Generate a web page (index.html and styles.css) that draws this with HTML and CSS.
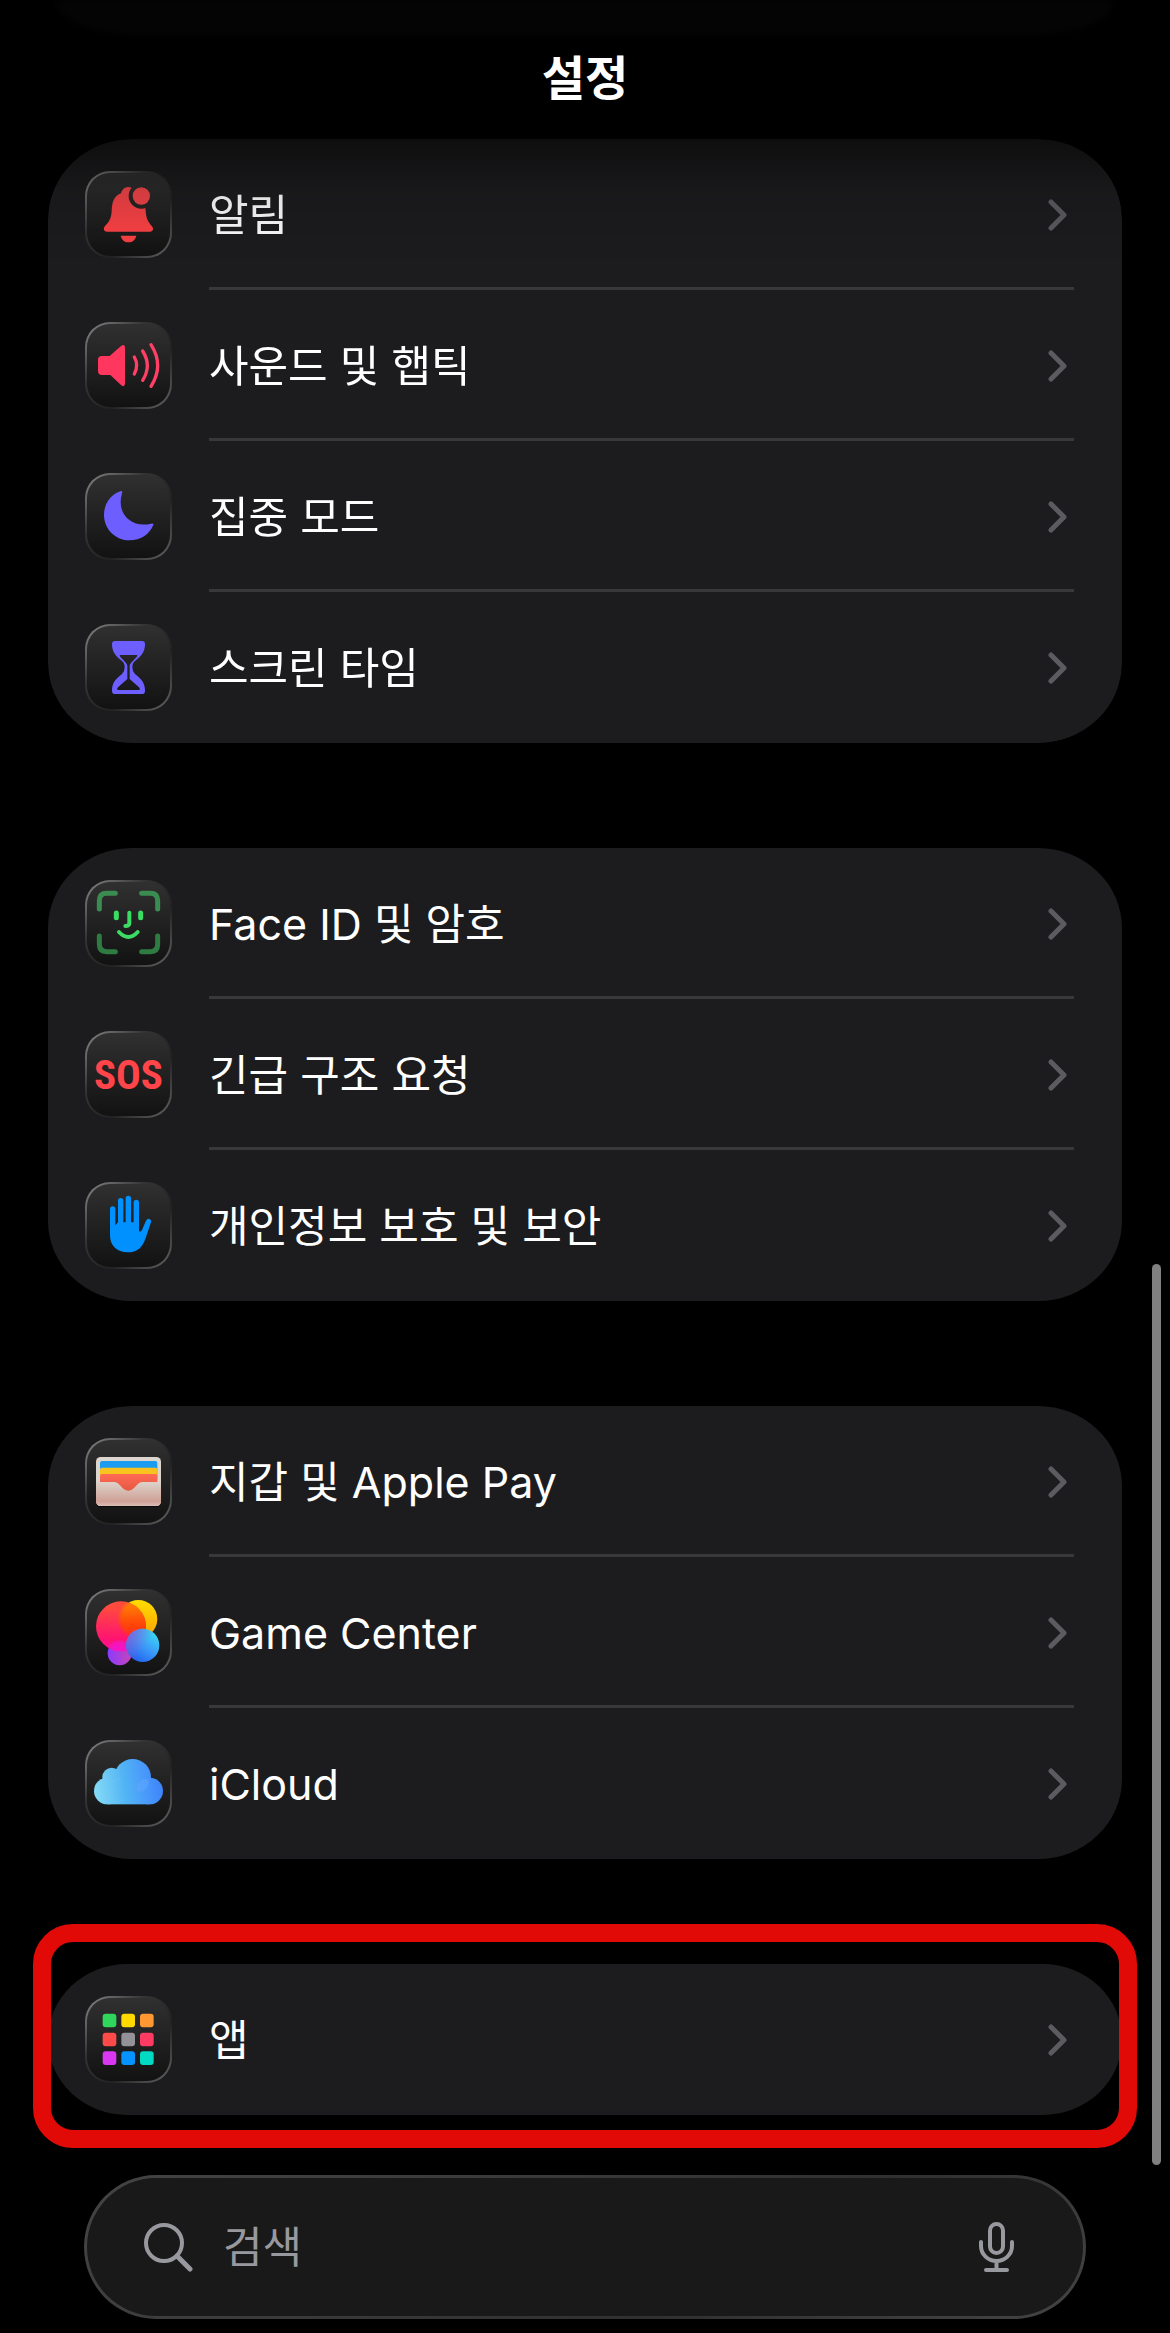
FILE: index.html
```html
<!DOCTYPE html>
<html lang="ko">
<head>
    <meta charset="UTF-8">
    <meta name="viewport" content="width=device-width, initial-scale=1.0">
    <title>설정</title>
    <link rel="stylesheet" href="styles.css">
</head>
<body>
    <header class="header">
        <div class="card-peek"></div>
        <h1 class="title">설정</h1>
    </header>

    <main class="groups">
        <nav class="card card-faded">
            <a class="row" href="#notifications">
                <span class="tile">
                    <svg viewBox="6 6 249 249">
                        <defs>
                            <linearGradient id="bell" x1="0" y1="0" x2="0" y2="1">
                                <stop offset="0" stop-color="#f04448"/>
                                <stop offset="1" stop-color="#ff4245"/>
                            </linearGradient>
                            <mask id="bell-cut">
                                <rect width="261" height="261" fill="#fff"/>
                                <circle cx="169" cy="75" r="38" fill="#000"/>
                            </mask>
                        </defs>
                        <path mask="url(#bell-cut)" fill="url(#bell)" d="M66 182C56 182 54 172 60 165C72 153 79 142 80 120C81 92 88 74 108 67C112 54 120 48 131 48C141 48 148 54 152 67C172 74 181 92 182 120C183 142 190 153 200 165C207 172 205 182 195 182Z"/>
                        <circle cx="169" cy="75" r="26" fill="#f04448"/>
                        <path fill="#ff4245" d="M107 194H154C151 207 142 214 130 214C119 214 110 207 107 194Z"/>
                    </svg>
                </span>
                <span class="label">알림</span>
                <svg class="chevron" viewBox="0 0 19 32"><path d="M3 3L16 16L3 29"/></svg>
            </a>
            <a class="row" href="#sounds">
                <span class="tile">
                    <svg viewBox="6 6 249 249">
                        <path fill="#ff375f" d="M51 102H74L108 72Q120 64 120 77V184Q120 198 108 189L76 159H51Q39 159 39 148V113Q39 102 51 102Z"/>
                        <g fill="none" stroke="#ff3f66" stroke-width="10" stroke-linecap="round">
                            <path d="M148 105Q162 130 148 156"/>
                            <path d="M173 87Q201 131 173 175"/>
                            <path d="M198 68Q238 131 198 193"/>
                        </g>
                    </svg>
                </span>
                <span class="label">사운드 및 햅틱</span>
                <svg class="chevron" viewBox="0 0 19 32"><path d="M3 3L16 16L3 29"/></svg>
            </a>
            <a class="row" href="#focus">
                <span class="tile">
                    <svg viewBox="6 6 249 249">
                        <path fill="#6d5fff" d="M108 54C78 63 57 92 57 125C57 168 91 202 134 202C166 202 194 184 205 156Q207 150 198 152C150 164 107 135 107 88Q107 76 111 61Q113 52 108 54Z"/>
                    </svg>
                </span>
                <span class="label">집중 모드</span>
                <svg class="chevron" viewBox="0 0 19 32"><path d="M3 3L16 16L3 29"/></svg>
            </a>
            <a class="row" href="#screen-time">
                <span class="tile">
                    <svg viewBox="6 6 249 249">
                        <path fill="#6d5fff" fill-rule="evenodd" d="M90 51H171Q180 51 180 61C180 85 168 97 150 111Q142 117 142 130Q142 143 150 150C168 164 180 176 180 200Q180 210 171 210H90Q81 210 81 200C81 176 93 164 111 150Q119 143 119 130Q119 117 111 111C93 97 81 85 81 61Q81 51 90 51ZM104 93Q104 98 110 103L123 117Q127 121 127 126V165L99 190Q94 195 98 198H163Q167 195 162 190L134 165V126Q134 121 138 117L151 103Q157 98 157 93Z"/>
                    </svg>
                </span>
                <span class="label">스크린 타임</span>
                <svg class="chevron" viewBox="0 0 19 32"><path d="M3 3L16 16L3 29"/></svg>
            </a>
        </nav>

        <nav class="card">
            <a class="row" href="#face-id">
                <span class="tile">
                    <svg viewBox="6 6 249 249" fill="none" stroke-linecap="round">
                        <g stroke-width="15">
                            <path stroke="#3b8c50" d="M43 87V62Q43 40 65 40H91M170 40H196Q218 40 218 62V87"/>
                            <path stroke="#2f7c43" d="M43 168V193Q43 215 65 215H91M170 215H196Q218 215 218 193V168"/>
                        </g>
                        <path stroke="#3bdc63" stroke-width="15" d="M94 99V113M167 99V113"/>
                        <path stroke="#3bdc63" stroke-width="12" d="M133 98V130Q133 138 121 138"/>
                        <path stroke="#3bdc63" stroke-width="12" d="M102 156Q130 186 158 156"/>
                    </svg>
                </span>
                <span class="label">Face ID 및 암호</span>
                <svg class="chevron" viewBox="0 0 19 32"><path d="M3 3L16 16L3 29"/></svg>
            </a>
            <a class="row" href="#sos">
                <span class="tile tile-sos">SOS</span>
                <span class="label">긴급 구조 요청</span>
                <svg class="chevron" viewBox="0 0 19 32"><path d="M3 3L16 16L3 29"/></svg>
            </a>
            <a class="row" href="#privacy">
                <span class="tile">
                    <svg viewBox="6 6 249 249">
                        <g stroke="#0091ff" stroke-width="16" stroke-linecap="round">
                            <path d="M83 81V150M107 56V150M130 49V150M154 61V150"/>
                        </g>
                        <path fill="#0091ff" d="M75 130L91 130L99 121H162V146Q166 152 171 144L183 116Q188 108 194 111Q200 114 198 121L182 168C172 198 155 211 128 211C95 211 75 190 75 160Z"/>
                    </svg>
                </span>
                <span class="label">개인정보 보호 및 보안</span>
                <svg class="chevron" viewBox="0 0 19 32"><path d="M3 3L16 16L3 29"/></svg>
            </a>
        </nav>

        <nav class="card">
            <a class="row" href="#wallet">
                <span class="tile">
                    <svg viewBox="6 6 249 249">
                        <defs>
                            <linearGradient id="pocket" x1="0" y1="0" x2="0" y2="1">
                                <stop offset="0" stop-color="#dcd3cb"/>
                                <stop offset="0.8" stop-color="#d0a196"/>
                                <stop offset="1" stop-color="#d9bdb3"/>
                            </linearGradient>
                            <linearGradient id="card-red" x1="0" y1="0" x2="0" y2="1">
                                <stop offset="0" stop-color="#ff6a55"/>
                                <stop offset="1" stop-color="#e0553f"/>
                            </linearGradient>
                        </defs>
                        <rect x="33" y="61" width="195" height="147" rx="14" fill="#0c0c0c"/>
                        <rect x="33" y="57" width="195" height="147" rx="14" fill="#ddd6ce"/>
                        <rect x="45" y="69" width="172" height="60" rx="6" fill="#1c9cf0"/>
                        <rect x="45" y="89" width="172" height="50" rx="6" fill="#f9c31f"/>
                        <rect x="45" y="108" width="172" height="60" rx="6" fill="url(#card-red)"/>
                        <path fill="url(#pocket)" d="M33 132H86C106 132 110 158 130 158C150 158 154 132 174 132H228V190Q228 204 214 204H47Q33 204 33 190Z"/>
                    </svg>
                </span>
                <span class="label">지갑 및 Apple Pay</span>
                <svg class="chevron" viewBox="0 0 19 32"><path d="M3 3L16 16L3 29"/></svg>
            </a>
            <a class="row" href="#game-center">
                <span class="tile">
                    <svg viewBox="6 6 249 249">
                        <defs>
                            <linearGradient id="gc-yellow" x1="0" y1="0" x2="0" y2="1">
                                <stop offset="0" stop-color="#ffdc00"/>
                                <stop offset="1" stop-color="#ffa000"/>
                            </linearGradient>
                            <linearGradient id="gc-pink" x1="0" y1="0" x2="0" y2="1">
                                <stop offset="0.1" stop-color="#ff4b3e"/>
                                <stop offset="0.75" stop-color="#ff1470"/>
                                <stop offset="1" stop-color="#ff10a0"/>
                            </linearGradient>
                            <linearGradient id="gc-mix" x1="0" y1="0" x2="0" y2="1">
                                <stop offset="0" stop-color="#ff9000"/>
                                <stop offset="0.7" stop-color="#ff4200"/>
                                <stop offset="1" stop-color="#ff3020"/>
                            </linearGradient>
                            <linearGradient id="gc-purple" x1="0" y1="0" x2="1" y2="0">
                                <stop offset="0" stop-color="#8a3cff"/>
                                <stop offset="1" stop-color="#c844b8"/>
                            </linearGradient>
                            <linearGradient id="gc-blue" x1="0.9" y1="0.1" x2="0.3" y2="1">
                                <stop offset="0" stop-color="#38dcf4"/>
                                <stop offset="0.5" stop-color="#3c9cf8"/>
                                <stop offset="1" stop-color="#2260f0"/>
                            </linearGradient>
                            <linearGradient id="gc-shade" x1="0" y1="0.1" x2="0.6" y2="0.5">
                                <stop offset="0" stop-color="#8060d8"/>
                                <stop offset="1" stop-color="#8060d8" stop-opacity="0"/>
                            </linearGradient>
                            <clipPath id="gc-pink-clip"><circle cx="108" cy="112" r="75"/></clipPath>
                            <filter id="gc-soft"><feGaussianBlur stdDeviation="5"/></filter>
                        </defs>
                        <circle cx="104" cy="193" r="36" fill="url(#gc-purple)"/>
                        <circle cx="160" cy="90" r="57" fill="url(#gc-yellow)"/>
                        <circle cx="108" cy="112" r="75" fill="url(#gc-pink)"/>
                        <g clip-path="url(#gc-pink-clip)">
                            <circle cx="160" cy="90" r="57" fill="url(#gc-mix)" opacity="0.9" filter="url(#gc-soft)"/>
                            <circle cx="104" cy="193" r="36" fill="#f018d0" opacity="0.8" filter="url(#gc-soft)"/>
                        </g>
                        <circle cx="173" cy="169" r="50" fill="url(#gc-blue)"/>
                        <circle cx="173" cy="169" r="50" fill="url(#gc-shade)"/>
                    </svg>
                </span>
                <span class="label">Game Center</span>
                <svg class="chevron" viewBox="0 0 19 32"><path d="M3 3L16 16L3 29"/></svg>
            </a>
            <a class="row" href="#icloud">
                <span class="tile">
                    <svg viewBox="6 6 249 249">
                        <defs>
                            <linearGradient id="cloud" gradientUnits="userSpaceOnUse" x1="27" y1="160" x2="234" y2="130">
                                <stop offset="0" stop-color="#86dcf6"/>
                                <stop offset="0.45" stop-color="#52b4f4"/>
                                <stop offset="0.8" stop-color="#4794fc"/>
                                <stop offset="1" stop-color="#3d82f8"/>
                            </linearGradient>
                        </defs>
                        <g fill="url(#cloud)">
                            <circle cx="67" cy="153" r="40"/>
                            <circle cx="194" cy="153" r="40"/>
                            <circle cx="80" cy="111" r="28"/>
                            <circle cx="143" cy="112" r="55"/>
                            <rect x="67" y="120" width="127" height="73"/>
                        </g>
                        <ellipse cx="173" cy="136" rx="14" ry="23" fill="#62a8ff" opacity="0.5" transform="rotate(40 173 136)"/>
                        <path fill="none" stroke="#7cc4fc" stroke-width="2" opacity="0.7" d="M53 120Q84 132 107 114"/>
                    </svg>
                </span>
                <span class="label">iCloud</span>
                <svg class="chevron" viewBox="0 0 19 32"><path d="M3 3L16 16L3 29"/></svg>
            </a>
        </nav>

        <nav class="card card-marked">
            <a class="row" href="#apps">
                <span class="tile">
                    <svg viewBox="6 6 249 249">
                        <rect x="53" y="53" width="41" height="41" rx="9" fill="#30d65c"/>
                        <rect x="109" y="53" width="41" height="41" rx="9" fill="#ffd900"/>
                        <rect x="165" y="53" width="41" height="41" rx="9" fill="#ff9733"/>
                        <rect x="53" y="110" width="41" height="41" rx="9" fill="#ff4a4a"/>
                        <rect x="109" y="110" width="41" height="41" rx="9" fill="#929298"/>
                        <rect x="165" y="110" width="41" height="41" rx="9" fill="#ff3b64"/>
                        <rect x="53" y="166" width="41" height="41" rx="9" fill="#da37f2"/>
                        <rect x="109" y="166" width="41" height="41" rx="9" fill="#0793ff"/>
                        <rect x="165" y="166" width="41" height="41" rx="9" fill="#03dac3"/>
                    </svg>
                </span>
                <span class="label">앱</span>
                <svg class="chevron" viewBox="0 0 19 32"><path d="M3 3L16 16L3 29"/></svg>
            </a>
        </nav>
    </main>

    <form class="search" role="search">
        <label class="search-icon" for="search-input" aria-label="검색">
            <svg viewBox="0 0 49 49"><circle cx="20" cy="20" r="18"/><path d="M33 33L46 46" stroke-width="5"/></svg>
        </label>
        <input class="search-input" id="search-input" type="search" placeholder="검색">
        <button class="mic" type="button" aria-label="받아쓰기">
            <svg viewBox="0 0 35 50">
                <rect x="11" y="2" width="13" height="29" rx="6.5"/>
                <path d="M2 20V24A15.5 15 0 0 0 33 24V20M17.5 39V47M7 48H28"/>
            </svg>
        </button>
    </form>

    <div class="scrollbar"></div>
</body>
</html>
```
FILE: styles.css
```css
* {
    box-sizing: border-box;
}

body {
    margin: 0;
    padding-bottom: 14px;
    background-color: #000;
    color: #fff;
    font-family: Inter, 'Noto Sans CJK KR', sans-serif;
    font-size: 43px;
    line-height: 52px;
}

svg {
    display: block;
}

.header {
    height: 139px;
    text-align: center;
}

/* 위로 스크롤된 카드의 아래쪽 */
.card-peek {
    height: 35px;
    margin: 0 56px;
    border-radius: 0 0 80px 80px / 0 0 35px 35px;
    background-color: #040404;
    filter: blur(3px);
}

.title {
    margin: 0;
    padding-top: 11px;
    font-size: 47px;
    font-weight: 600;
    line-height: 64px;
}

.groups {
    display: flex;
    flex-direction: column;
    gap: 105px;
    padding: 0 48px;
}

.card {
    position: relative;
    border-radius: 84px / 80px;
    background-color: #1c1c1e;
}

/* 제목 아래에서 흐려지는 첫 카드 */
.card-faded {
    -webkit-mask-image: linear-gradient(rgba(0, 0, 0, 0.5), rgba(0, 0, 0, 0.88) 52px, #000 130px);
    mask-image: linear-gradient(rgba(0, 0, 0, 0.5), rgba(0, 0, 0, 0.88) 52px, #000 130px);
}

/* 강조 테두리 */
.card-marked::after {
    content: "";
    position: absolute;
    inset: -40px -15px -33px;
    border: 18px solid #e20a07;
    border-radius: 40px;
    pointer-events: none;
}

.row {
    position: relative;
    display: flex;
    align-items: center;
    gap: 37px;
    height: 151px;
    padding: 0 55px 0 37px;
    color: #fff;
    text-decoration: none;
}

.row:not(:last-child)::after {
    content: "";
    position: absolute;
    left: 161px;
    right: 48px;
    bottom: 0;
    height: 3px;
    background-color: #38383a;
}

.tile {
    flex: none;
    width: 87px;
    height: 87px;
    border: 2px solid transparent;
    border-radius: 25px;
    background:
        linear-gradient(#303030, #121212) padding-box,
        linear-gradient(135deg, #8a8a8a, #333 35%, #222 65%, #666) border-box;
}

.tile-sos {
    display: flex;
    align-items: center;
    justify-content: center;
    color: #ff4549;
    font-family: 'Roboto Condensed', 'Open Sans Condensed', Roboto, sans-serif;
    font-size: 41px;
    font-weight: bold;
}

.label {
    flex: 1;
}

.chevron {
    width: 19px;
    height: 32px;
    fill: none;
    stroke: #5b5b60;
    stroke-width: 5;
    stroke-linecap: round;
    stroke-linejoin: round;
}

.search {
    display: flex;
    align-items: center;
    height: 144px;
    margin: 60px 84px 0;
    padding: 0 69px 0 57px;
    border: 3px solid transparent;
    border-radius: 76px;
    background:
        linear-gradient(#191919, #191919) padding-box,
        linear-gradient(150deg, #444, #3a3a3a 35%, #303030 65%, #444) border-box;
}

.search svg {
    fill: none;
    stroke: #98989f;
    stroke-width: 4;
    stroke-linecap: round;
}

.search-icon svg {
    width: 49px;
    height: 49px;
}

.search-input {
    flex: 1;
    min-width: 0;
    margin: 0 30px;
    padding: 0;
    border: none;
    outline: none;
    background: none;
    color: #fff;
    font: inherit;
}

.search-input::placeholder {
    color: #98989f;
}

.mic {
    padding: 0;
    border: none;
    background: none;
    cursor: pointer;
}

.mic svg {
    width: 35px;
    height: 50px;
}

.scrollbar {
    position: fixed;
    top: 54.2%;
    right: 9px;
    bottom: 7.2%;
    width: 9px;
    border-radius: 5px;
    background-color: #808080;
}
```
